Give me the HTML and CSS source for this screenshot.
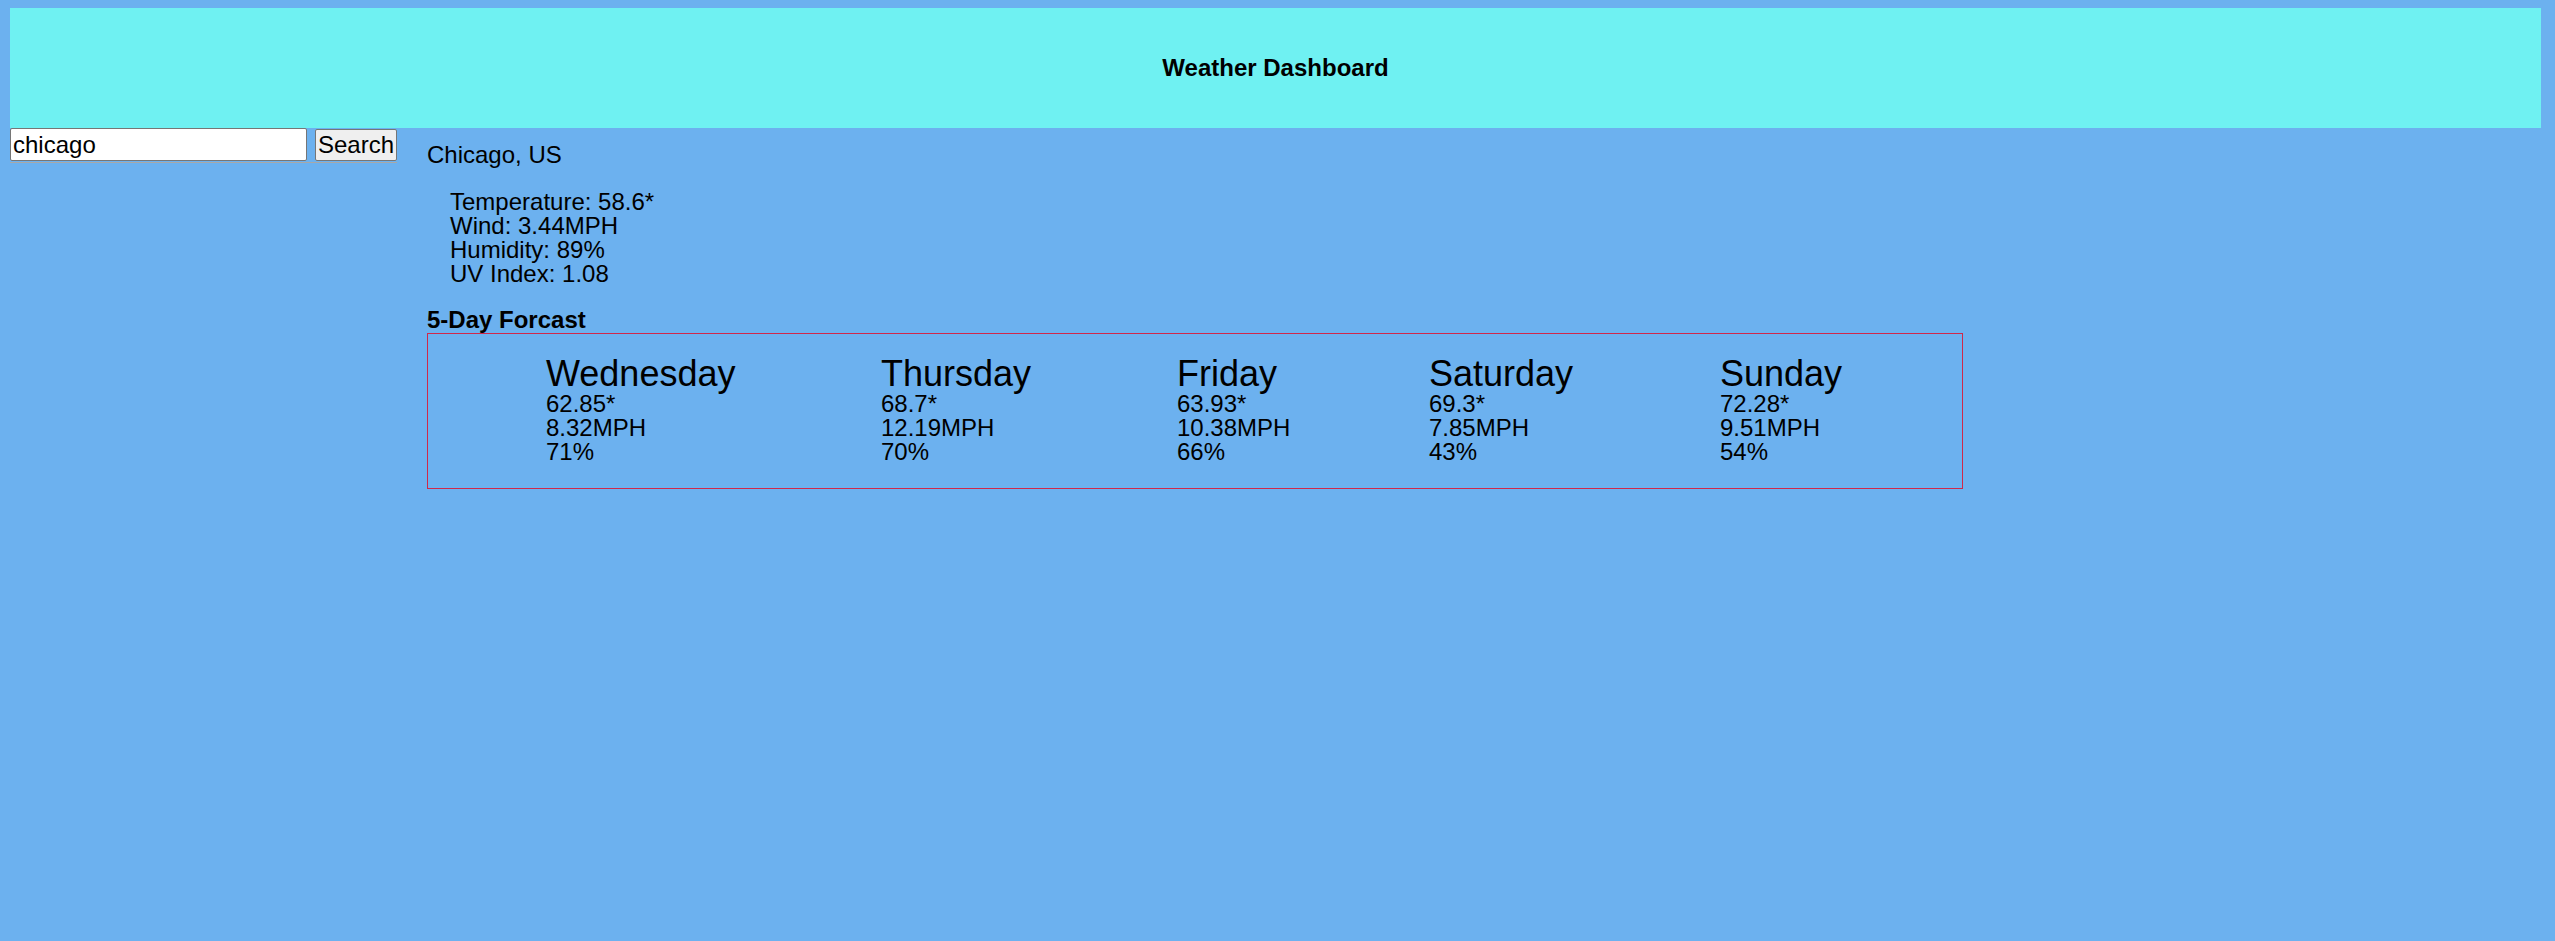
FILE: index.html
```html
<!DOCTYPE html>
<html lang="en">
<head>
<meta charset="utf-8">
<title>Weather Dashboard</title>
<link rel="stylesheet" href="styles.css">
</head>
<body>
<header class="site-header">
  <h2 class="site-title">Weather Dashboard</h2>
</header>
<div class="layout">
  <aside class="sidebar">
    <form class="search-form">
      <input class="search-input" type="text" value="chicago">
      <button class="search-btn" type="button">Search</button>
    </form>
  </aside>
  <main class="main">
    <div class="city">Chicago, US</div>
    <div class="current">
      <div>Temperature: 58.6*</div>
      <div>Wind: 3.44MPH</div>
      <div>Humidity: 89%</div>
      <div>UV Index: 1.08</div>
    </div>
    <h3 class="forecast-title">5-Day Forcast</h3>
    <div class="forecast">
      <div class="day">
        <div class="day-name">Wednesday</div>
        <div>62.85*</div>
        <div>8.32MPH</div>
        <div>71%</div>
      </div>
      <div class="day">
        <div class="day-name">Thursday</div>
        <div>68.7*</div>
        <div>12.19MPH</div>
        <div>70%</div>
      </div>
      <div class="day">
        <div class="day-name">Friday</div>
        <div>63.93*</div>
        <div>10.38MPH</div>
        <div>66%</div>
      </div>
      <div class="day">
        <div class="day-name">Saturday</div>
        <div>69.3*</div>
        <div>7.85MPH</div>
        <div>43%</div>
      </div>
      <div class="day">
        <div class="day-name">Sunday</div>
        <div>72.28*</div>
        <div>9.51MPH</div>
        <div>54%</div>
      </div>
    </div>
  </main>
</div>
</body>
</html>
```
FILE: styles.css
```css
html, body {
  background: #6cb1ef;
}
body {
  margin: 8px 14px 8px 10px;
  font-family: "Liberation Sans", Arial, sans-serif;
  color: #000;
  font-size: 24px;
}
.site-header {
  height: 120px;
  background: #6ff1f2;
  display: flex;
  align-items: center;
  justify-content: center;
}
.site-title {
  margin: 0;
  font-size: 24px;
  font-weight: bold;
}
.layout {
  display: flex;
}
.sidebar {
  width: 417px;
  flex: none;
}
.search-form {
  margin: 0;
  width: 387px;
  display: flex;
  align-items: flex-start;
  gap: 8px;
  padding-bottom: 1px;
  border-bottom: 1px solid #a8a8a8;
}
.search-input {
  box-sizing: border-box;
  width: 297px;
  height: 33px;
  margin: 0;
  padding: 1px 2px;
  font-family: "Liberation Sans", Arial, sans-serif;
  font-size: 24px;
  color: #000;
  background: #fff;
  border: 1px solid #767676;
  border-radius: 2px;
}
.search-btn {
  box-sizing: border-box;
  width: 82px;
  height: 32px;
  margin: 1px 0 0;
  padding: 0;
  font-family: "Liberation Sans", Arial, sans-serif;
  font-size: 24px;
  line-height: 28px;
  color: #000;
  background: #efefef;
  border: 1px solid #767676;
  border-radius: 2px;
}
.main {
  padding-top: 13px;
}
.city {
  font-size: 24px;
  line-height: 27px;
}
.current {
  margin-top: 22px;
  padding-left: 23px;
  line-height: 24px;
}
.forecast-title {
  margin: 20px 0 0;
  font-size: 24px;
  line-height: 27px;
  font-weight: bold;
}
.forecast {
  box-sizing: border-box;
  width: 1536px;
  border: 1px solid #d0284a;
  padding: 22px 0 24px 118px;
  display: grid;
  grid-template-columns: 335px 296px 252px 291px auto;
}
.day {
  line-height: 24px;
}
.day-name {
  font-size: 36px;
  line-height: 36px;
}
```
